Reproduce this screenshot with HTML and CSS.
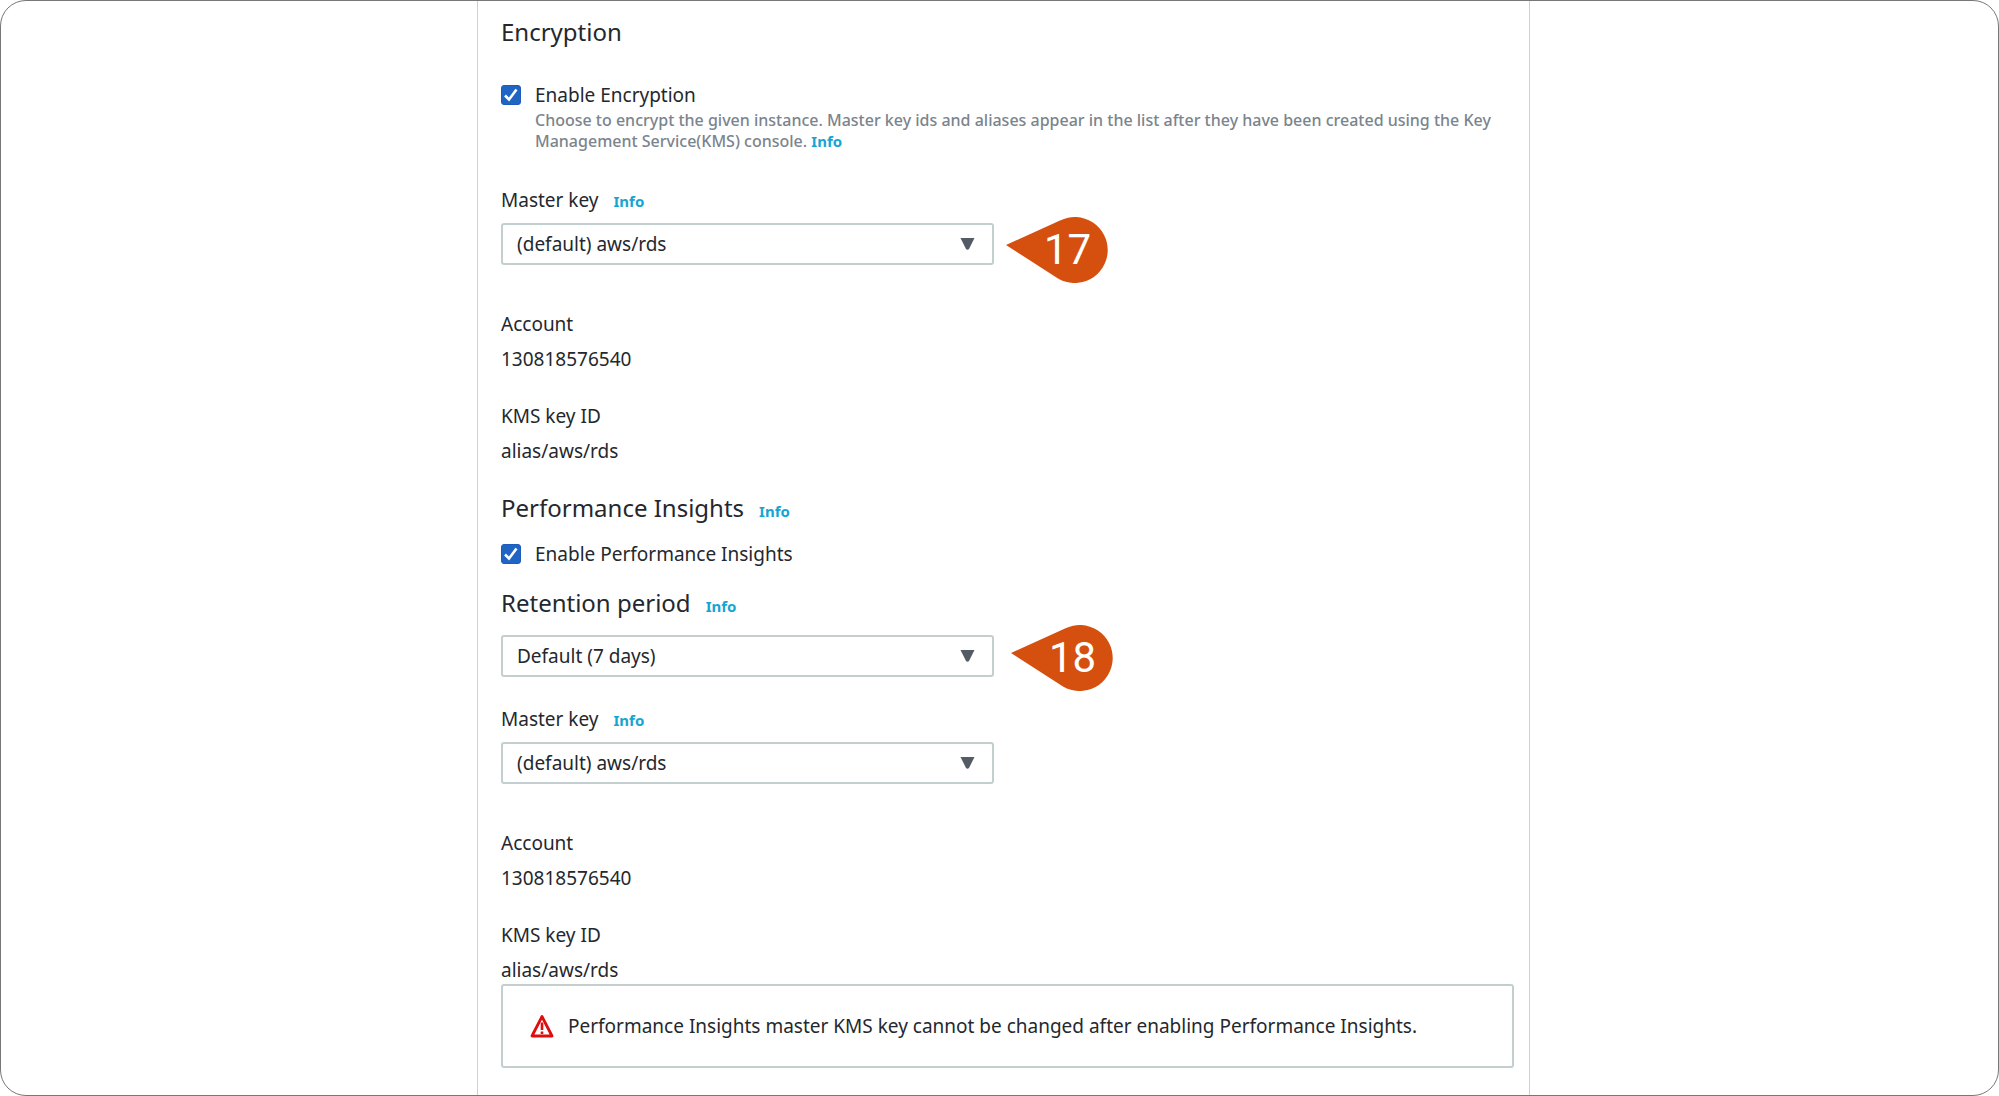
FILE: index.html
```html
<!DOCTYPE html>
<html lang="en">
<head>
<meta charset="utf-8">
<meta name="viewport" content="width=device-width, initial-scale=1">
<title>Encryption and Performance Insights</title>
<link rel="stylesheet" href="styles.css">
</head>
<body>
<div class="frame">
<main class="panel">
  <section class="section">
    <h2 class="heading">Encryption</h2>
    <div class="check check-first">
      <span class="tick">
        <input type="checkbox" id="enable-encryption" class="tick-input" aria-describedby="encryption-hint" checked>
        <svg class="tick-mark" viewBox="0 0 20 20" aria-hidden="true"><path d="M4 10.5 8 14.5 15.5 4.5" fill="none" stroke="#fff" stroke-width="2.6"/></svg>
      </span>
      <label for="enable-encryption">Enable Encryption</label>
      <p class="hint" id="encryption-hint">Choose to encrypt the given instance. Master key ids and aliases appear in the list after they have been created using the Key Management Service(KMS) console. <a class="info" href="#">Info</a></p>
    </div>
    <div class="title-row field-title"><label for="encryption-key">Master key</label><a class="info" href="#">Info</a></div>
    <div class="select-row">
      <span class="picker">
        <select id="encryption-key" class="select"><option>(default) aws/rds</option></select>
        <svg class="arrow" viewBox="0 0 14 12" aria-hidden="true"><path d="M0 0H14L8.5 11Q7 12.500 5.500 11Z" fill="#545b64"/></svg>
      </span>
      <span class="callout callout-low">
        <svg class="callout-shape" viewBox="0 0 103 66" aria-hidden="true"><path d="M0 28 54 3.500A33 33 0 1 1 52 61.500Z" fill="#d5500f"/></svg>
        <span class="callout-number">17</span>
      </span>
    </div>
    <dl class="details">
      <dt>Account</dt><dd>130818576540</dd>
      <dt>KMS key ID</dt><dd>alias/aws/rds</dd>
    </dl>
  </section>
  <section class="section insights">
    <div class="title-row"><h2 class="heading">Performance Insights</h2><a class="info" href="#">Info</a></div>
    <div class="check">
      <span class="tick">
        <input type="checkbox" id="enable-insights" class="tick-input" checked>
        <svg class="tick-mark" viewBox="0 0 20 20" aria-hidden="true"><path d="M4 10.5 8 14.5 15.5 4.5" fill="none" stroke="#fff" stroke-width="2.6"/></svg>
      </span>
      <label for="enable-insights">Enable Performance Insights</label>
    </div>
    <div class="title-row retention-title"><label class="heading" for="retention">Retention period</label><a class="info" href="#">Info</a></div>
    <div class="select-row retention-row">
      <span class="picker">
        <select id="retention" class="select"><option>Default (7 days)</option></select>
        <svg class="arrow" viewBox="0 0 14 12" aria-hidden="true"><path d="M0 0H14L8.5 11Q7 12.500 5.500 11Z" fill="#545b64"/></svg>
      </span>
      <span class="callout callout-far">
        <svg class="callout-shape" viewBox="0 0 103 66" aria-hidden="true"><path d="M0 28 54 3.500A33 33 0 1 1 52 61.500Z" fill="#d5500f"/></svg>
        <span class="callout-number">18</span>
      </span>
    </div>
    <div class="title-row insights-key-title"><label for="insights-key">Master key</label><a class="info" href="#">Info</a></div>
    <div class="select-row">
      <span class="picker">
        <select id="insights-key" class="select"><option>(default) aws/rds</option></select>
        <svg class="arrow" viewBox="0 0 14 12" aria-hidden="true"><path d="M0 0H14L8.5 11Q7 12.500 5.500 11Z" fill="#545b64"/></svg>
      </span>
    </div>
    <dl class="details">
      <dt>Account</dt><dd>130818576540</dd>
      <dt>KMS key ID</dt><dd>alias/aws/rds</dd>
    </dl>
    <div class="alert" role="note">
      <svg class="alert-icon" viewBox="0 0 24 24" aria-hidden="true"><path d="M12 2.500 22 22H2Z" fill="none" stroke="#df0d0d" stroke-width="2.800" stroke-linejoin="round"/><path d="M12 8.500V16M12 17.500V20" stroke="#df0d0d" stroke-width="2.600"/></svg>
      <p class="alert-text">Performance Insights master KMS key cannot be changed after enabling Performance Insights.</p>
    </div>
  </section>
</main>
</div>
</body>
</html>
```
FILE: styles.css
```css
* { box-sizing: border-box; }

body {
  margin: 0;
  background: #fff;
  color: #24282e;
  font: 19px/24px "Noto Sans", "Open Sans", sans-serif;
}

p, h2, dl, dd { margin: 0; }

.frame {
  display: grid;
  grid-template-columns: 476fr minmax(0, 1053px) 468fr;
  min-height: 100vh;
  border: 1px solid #777;
  border-radius: 26px;
}

.panel {
  grid-column: 2;
  padding: 15px 15px 20px 23px;
  border: solid #d0d2d2;
  border-width: 0 1px;
}

.heading {
  font-size: 24px;
  font-weight: 400;
  line-height: 32px;
}

.title-row {
  display: flex;
  align-items: baseline;
  gap: 15px;
}

.info {
  color: #16a5d3;
  font-size: 15px;
  font-weight: 700;
  text-decoration: none;
}

.check {
  display: grid;
  grid-template-columns: 20px 1fr;
  column-gap: 14px;
  row-gap: 3px;
  align-items: center;
  margin-top: 18px;
}

.check-first { margin-top: 35px; }

.tick {
  display: grid;
  width: 20px;
  height: 20px;
}

.tick-input,
.tick-mark { grid-area: 1 / 1; }

.tick-input {
  appearance: none;
  width: 20px;
  height: 20px;
  margin: 0;
  border: 1px solid #1d5cb8;
  border-radius: 3px;
}

.tick-input:checked { background: #2065c4; }

.tick-mark {
  width: 20px;
  height: 20px;
  pointer-events: none;
}

.hint {
  grid-column: 2;
  color: #7b848d;
  font-size: 16px;
  font-weight: 500;
  line-height: 21px;
}

.field-title { margin-top: 36px; }

.select-row {
  display: flex;
  align-items: center;
  gap: 12px;
  height: 42px;
  margin-top: 10px;
}

.retention-title { margin-top: 21px; }
.retention-row { margin-top: 16px; }
.insights-key-title { margin-top: 30px; }

.picker {
  display: grid;
  align-items: center;
  flex: 0 1 493px;
}

.select,
.arrow { grid-area: 1 / 1; }

.select {
  appearance: none;
  width: 100%;
  height: 42px;
  padding: 0 48px 0 14px;
  border: 2px solid #c3cfcf;
  border-radius: 3px;
  background: #fff;
  color: inherit;
  font: inherit;
}

.arrow {
  justify-self: end;
  width: 15px;
  height: 12px;
  margin-right: 19px;
  pointer-events: none;
}

.callout {
  display: grid;
  align-items: center;
  width: 103px;
}

.callout-low { margin-top: 12px; }
.callout-far { margin: 3px 0 0 5px; }

.callout-shape,
.callout-number { grid-area: 1 / 1; }

.callout-shape {
  width: 103px;
  height: 66px;
}

.callout-number {
  padding-left: 38px;
  color: #fff;
  font: 42px/48px Roboto, sans-serif;
}

.details { margin-top: 47px; }
.details dd { margin-top: 11px; }
.details dd + dt { margin-top: 33px; }

.insights { margin-top: 29px; }

.alert {
  display: flex;
  align-items: center;
  gap: 14px;
  min-height: 84px;
  margin-top: 2px;
  padding: 16px 27px;
  border: 2px solid #c3cfcf;
  border-radius: 3px;
}

.alert-icon {
  flex: none;
  width: 24px;
  height: 24px;
}
```
